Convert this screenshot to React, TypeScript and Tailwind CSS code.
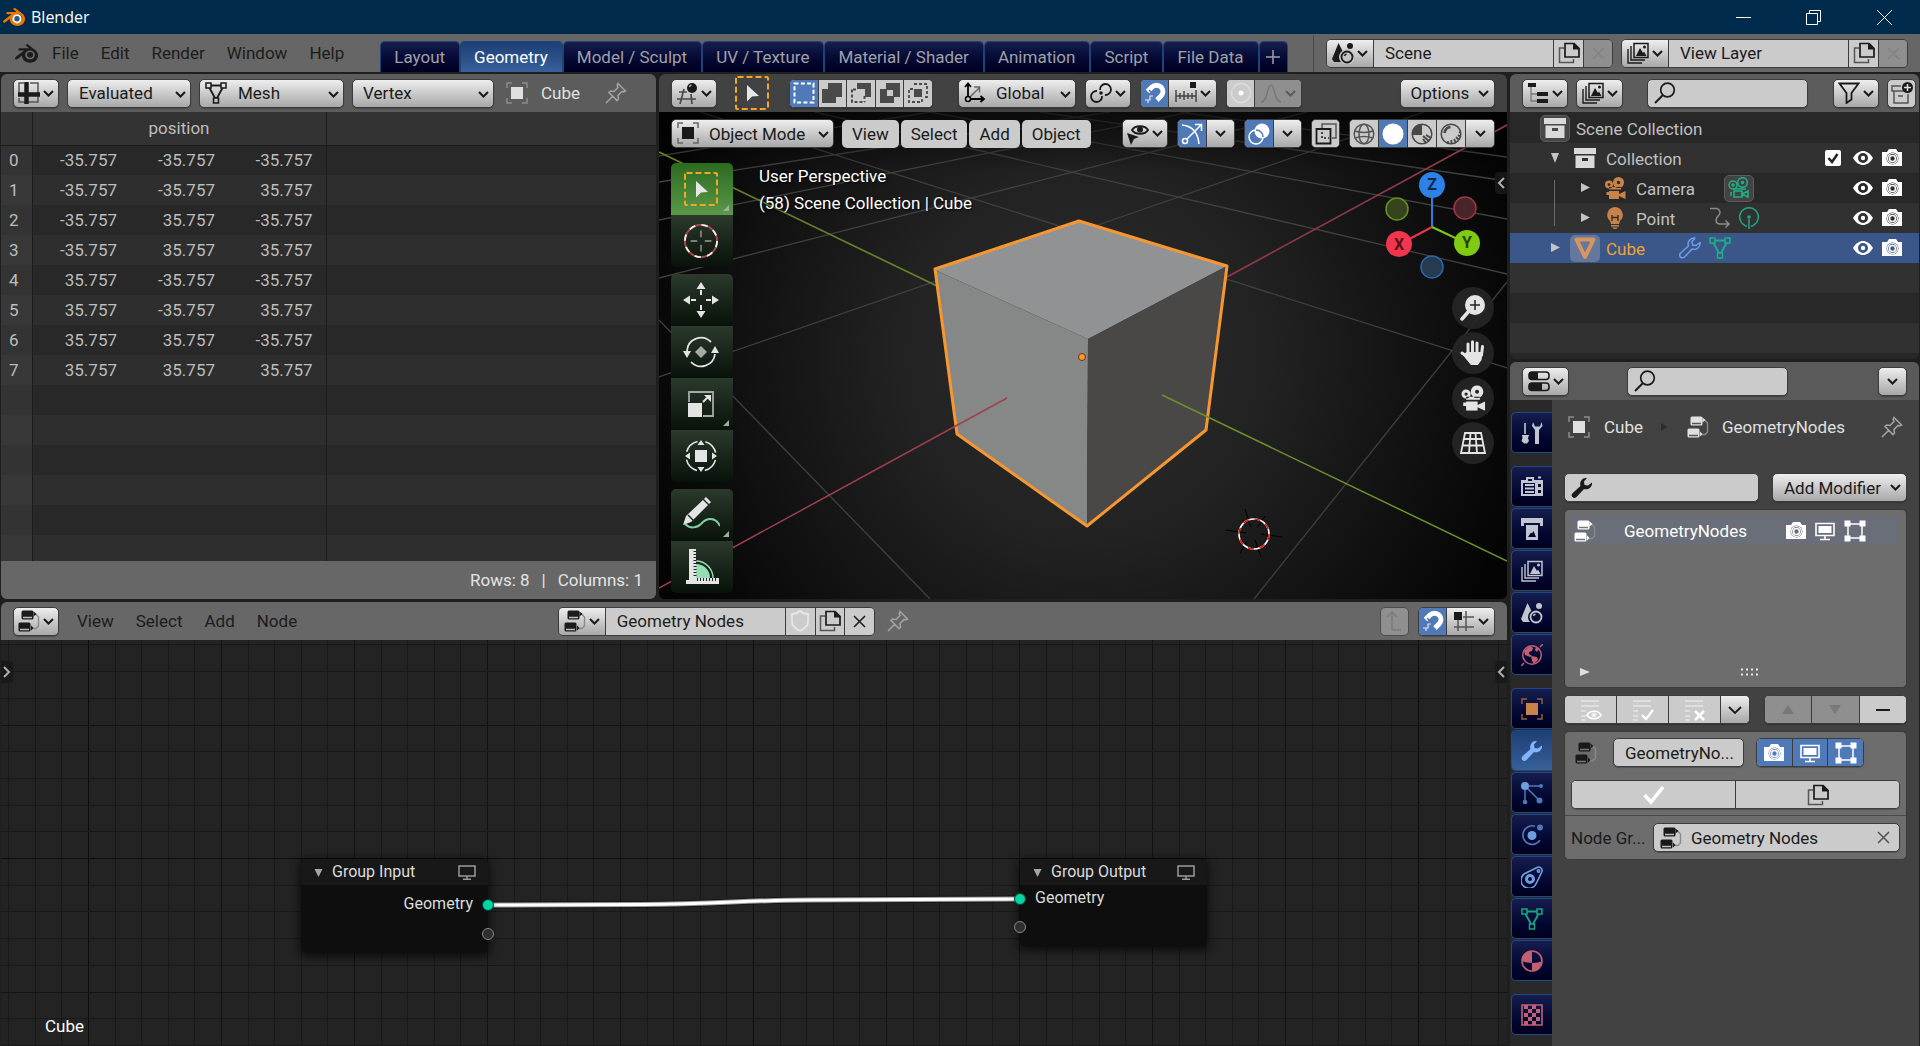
import React from "react";
import type { ReactNode } from "react";
import { SiBlender } from "react-icons/si";

const RAISED = "border border-[#3c3c3c] bg-linear-to-b from-[#eeeeee] to-[#a8a8a8] text-[#1a1a1a] shadow-[0_1px_1px_rgba(0,0,0,0.25)]";
const FLAT = "border border-[#3c3c3c] bg-[#cbcbcb] text-[#1a1a1a] shadow-[0_1px_1px_rgba(0,0,0,0.25)]";

/* ------------------------------------------------------------------ icons */

function Svg({ s = 22, box = 22, className = "", children }: { s?: number; box?: number; className?: string; children: ReactNode }) {
  return (
    <svg width={s} height={s} viewBox={`0 0 ${box} ${box}`} fill="none" stroke="currentColor" strokeWidth={1.5} className={`shrink-0 ${className}`} aria-hidden="true">
      {children}
    </svg>
  );
}

const Chevron = ({ className = "" }: { className?: string }) => (
  <svg width="11" height="7" viewBox="0 0 11 7" fill="none" stroke="currentColor" strokeWidth="2" className={`shrink-0 ${className}`} aria-hidden="true">
    <path d="M1 1l4.5 4.5L10 1" />
  </svg>
);

const SheetIcon = () => (
  <Svg>
    <path d="M1 6V1h5M12 1h8v5M1 16v4h5M12 20h8v-4M1 6v5M20 6v10M6 20h6" stroke="#555" />
    <path d="M8.5 0v22M0 12.5h22" strokeWidth="4.5" />
  </Svg>
);
const MeshIcon = ({ className = "" }: { className?: string }) => (
  <Svg className={className}>
    <path d="M6 3.5h10M4.5 6L10 16M17.5 6L12 16" strokeWidth="1.8" />
    <path d="M1 1h5v5H1zM16 1h5v5h-5zM8.5 16h5v5h-5z" />
  </Svg>
);
const ObjectIcon = ({ className = "", dim = "#8c8c8c" }: { className?: string; dim?: string }) => (
  <Svg className={className}>
    <path d="M1 6V1h5M16 1h5v5M21 16v5h-5M6 21H1v-5" stroke={dim} />
    <path d="M5 5h12v12H5z" fill="currentColor" stroke="none" />
  </Svg>
);
const PinIcon = () => (
  <Svg className="text-[#a2a2a2]">
    <path d="M13 1.5l7.5 7.5-2 1-1.500-.5-4 4 .5 3.5-1.500 1.5L4 10.5 5.5 9l3.5.5 4-4-.8-2zM8 14l-7 7" strokeWidth="1.6" />
  </Svg>
);
const ViewportIcon = () => (
  <Svg>
    <path d="M3 10h8M1 17h19M8 7L4 22M15 12l1 10" stroke="#4a4a4a" strokeWidth="1.7" />
    <circle cx="16" cy="6" r="5" fill="#1a1a1a" stroke="none" />
    <path d="M13.5 5a2.5 2.5 0 0 1 2-2" stroke="#aaa" />
  </Svg>
);
const SelectBox = ({ s = 34 }: { s?: number }) => (
  <Svg s={s} box={34}>
    <rect x="1" y="1" width="32" height="32" rx="1.5" stroke="#f5a623" strokeWidth="2" strokeDasharray="6 3" />
    <path d="M12 9l12 11-7 .5-5 5z" fill="#e6e6e6" stroke="none" />
  </Svg>
);
const ModeSet = () => (
  <Svg><rect x="1.5" y="1.5" width="19" height="19" strokeWidth="2" stroke="#fff" strokeDasharray="4 2.3" /></Svg>
);
const ModeAdd = () => (
  <Svg><path d="M7 1h14v14h-6v6H1V7h6z" fill="#4a4a4a" stroke="none" /></Svg>
);
const ModeSub = () => (
  <Svg>
    <path d="M7 1h14v14h-6V7H7z" fill="#4a4a4a" stroke="none" />
    <path d="M2 7.5v12.5h13" stroke="#4a4a4a" strokeWidth="2" strokeDasharray="3 2" />
    <path d="M3 7.5h5M14.5 14v6" stroke="#4a4a4a" strokeWidth="2" strokeDasharray="3 2" />
  </Svg>
);
const ModeDiff = () => (
  <Svg><path fillRule="evenodd" d="M7 1h14v14h-6v6H1V7h6zM8 8h6v6H8z" fill="#4a4a4a" stroke="none" /></Svg>
);
const ModeAnd = () => (
  <Svg>
    <path d="M7 2h13v13h-4M6 7H2v13h13v-4" stroke="#4a4a4a" strokeWidth="1.8" strokeDasharray="3 2" />
    <path d="M7 7h8v8H7z" fill="#4a4a4a" stroke="none" />
  </Svg>
);
const AxesIcon = () => (
  <Svg>
    <path d="M4 17V2M1 5l3-3.5L7 5M4 17h16M16.5 14l3.5 3-3.5 3" strokeWidth="1.8" />
    <path d="M6 15l9-9M10 5h5.5v5.5" stroke="#6a6a6a" />
    <circle cx="4" cy="17" r="2.5" fill="#cbcbcb" />
  </Svg>
);
const PivotIcon = () => (
  <Svg>
    <path d="M10 8a5.500 5.500 0 1 1 5 5M12 14a5.500 5.500 0 1 1-5-5" strokeWidth="1.8" />
    <circle cx="11" cy="11" r="1.8" fill="currentColor" stroke="none" />
  </Svg>
);
const MagnetIcon = () => (
  <Svg className="text-white">
    <path d="M3.5 9.5L8 5a6.3 6.3 0 0 1 9 9l-4.5 4.5" strokeWidth="5" />
    <path d="M5 8l4 4M10 16l4 4" stroke="#5079b8" strokeWidth="1.5" />
    <path d="M1 18h5v-4h3M4 21v-3" strokeWidth="1.2" stroke="#dfe8f5" />
  </Svg>
);
const IncrementIcon = () => (
  <Svg>
    <path d="M1 8v12M21 8v12M5 11v6M9 9v9M13 11v6M17 11v6M1 14h20" stroke="#444" strokeWidth="1.5" />
    <path d="M15 0h6v6h-6z" fill="currentColor" stroke="none" />
  </Svg>
);
const SceneIcon = ({ className = "" }: { className?: string }) => (
  <Svg className={className}>
    <path d="M6.5 1L12 12l-3 8H2l-2-3z" fill="currentColor" stroke="none" />
    <circle cx="18" cy="4" r="3" fill="currentColor" stroke="none" />
    <circle cx="15" cy="15" r="7.5" fill="#c4c4c4" stroke="#c4c4c4" strokeWidth="1" className="in-data-[tab]:fill-[#0a0d35] in-data-[tab]:stroke-[#0a0d35]" />
    <circle cx="15" cy="15" r="5.5" strokeWidth="1.8" />
    <path d="M12.5 14a3 3 0 0 1 2-2" />
  </Svg>
);
const LayersIcon = ({ className = "" }: { className?: string }) => (
  <Svg className={className}>
    <path d="M7 1.5h14v14H7z" />
    <path d="M4 4v14h14M1 7v14h14" strokeWidth="1.4" />
    <path d="M9 14l4-8 3 5 1-1.5 2.5 4.5z" fill="currentColor" stroke="none" />
    <circle cx="17.5" cy="5" r="1.5" fill="currentColor" stroke="none" />
  </Svg>
);
const CopyIcon = () => (
  <Svg>
    <path d="M6 6H1.5v14.5h14V17" stroke="#555" />
    <path d="M7 1.5h9l5 5V15H7z" strokeWidth="1.7" />
    <path d="M15 1h1.5L21.5 6v1.5H15z" fill="currentColor" stroke="none" />
  </Svg>
);
const CrossIcon = ({ className = "" }: { className?: string }) => (
  <Svg s={13} box={13} className={className}><path d="M1 1l11 11M12 1L1 12" strokeWidth="1.6" /></Svg>
);
const TreeIcon = () => (
  <Svg>
    <path d="M1 1h8v4H1zM10 10h11v4H10zM10 17h11v4H10z" fill="currentColor" stroke="none" />
    <path d="M4 5v14h6M4 12h6" stroke="#777" strokeWidth="1.3" />
  </Svg>
);
const SearchIcon = () => (
  <Svg><circle cx="13.5" cy="8" r="6.8" strokeWidth="1.7" /><path d="M9 13l-8 8" strokeWidth="1.9" /></Svg>
);
const FilterIcon = () => (
  <Svg><path d="M1.5 1.5h19l-7 9.5v6.5L8.5 21V11z" strokeWidth="1.8" /></Svg>
);
const NewCollectionIcon = () => (
  <Svg>
    <path d="M10 4H1v5h14M3 9v12h14v-9M7 14h5" stroke="#555" />
    <circle cx="16.5" cy="5.5" r="5.5" fill="#1a1a1a" stroke="none" />
    <path d="M16.5 2v7M13 5.5h7" stroke="#e0e0e0" />
  </Svg>
);
const ArchiveIcon = () => (
  <Svg className="text-[#dadada]">
    <path d="M0 1h22v6H0z" fill="currentColor" stroke="none" />
    <path fillRule="evenodd" d="M1.5 8.5h19V21h-19zM8 11v3h6v-3z" fill="currentColor" stroke="none" />
  </Svg>
);
const MovieIcon = ({ className = "", line = false }: { className?: string; line?: boolean }) =>
  line ? (
    <Svg className={className}>
      <circle cx="5" cy="8" r="4" /><circle cx="14.5" cy="5.5" r="4.8" />
      <circle cx="5" cy="8" r="1" /><circle cx="14.5" cy="5.5" r="1" />
      <path d="M5 12h13M6 14h8v6H6zM3 15v4M14 17l6-3v6z" />
    </Svg>
  ) : (
    <Svg className={className}>
      <path fillRule="evenodd" fill="currentColor" stroke="none" d="M5 3.5A4 4 0 1 1 5 11.5 4 4 0 1 1 5 3.5zM5 6.2a1.4 1.4 0 1 0 0 2.8 1.4 1.4 0 0 0 0-2.8zM14.5 0a5.5 5.5 0 1 1 0 11 5.5 5.5 0 0 1 0-11zM14.5 3.8a1.7 1.7 0 1 0 0 3.4 1.7 1.7 0 0 0 0-3.4zM5 10h12v2.5H5zM5 14h10v8H5zM2.5 15H5v3H2.5zM15 17l6.5-3v8L15 19z" />
    </Svg>
  );
const BulbIcon = () => (
  <Svg className="text-[#c8834a]">
    <path d="M11 0a8 8 0 0 1 5 14l-1 3H7l-1-3a8 8 0 0 1 5-14zM7 18h8v1.5H7zM8 20.5h6l-2 1.5h-2z" fill="currentColor" stroke="none" />
    <path d="M8 8v6M14 8v6M8 10.5h6" stroke="#303030" strokeWidth="1.4" />
  </Svg>
);
const FlowArrow = () => (
  <Svg className="text-[#8a8a8a]"><path d="M1 1.500h7a4 4 0 0 1 2 6.500c-4 3.500-4 9 1 9h9M16.5 13.5L20 17l-3.5 3.5" /></Svg>
);
const LightData = () => (
  <Svg className="text-[#1fa880]">
    <path d="M7 18.500a9.300 9.300 0 1 1 8 0" /><circle cx="11" cy="10" r="1.8" fill="currentColor" stroke="none" />
    <path d="M11 12v10" /><path d="M8 18v3M14 18v3" strokeDasharray="2 1" />
  </Svg>
);
const WRENCH = "M21 5.5a6 6 0 0 1-8 6.5L5.5 20a2.7 2.7 0 0 1-4-3.7L9.5 9A6 6 0 0 1 16 1l-3 3.5.5 3.5 3.5.5z";
const Wrench = ({ className = "", line = false }: { className?: string; line?: boolean }) => (
  <Svg className={className}><path d={WRENCH} fill={line ? "none" : "currentColor"} stroke={line ? "currentColor" : "none"} strokeLinejoin="round" /></Svg>
);
const CubeTriangle = () => (
  <Svg className="text-[#d9955f]"><path d="M2.5 2.5h17L11 20z" strokeWidth="4" strokeLinejoin="round" /></Svg>
);
const EyeIcon = () => (
  <Svg s={20} box={20} className="text-white">
    <path fillRule="evenodd" fill="currentColor" stroke="none" d="M0 10C3 5 6.5 3 10 3s7 2 10 7c-3 5-6.5 7-10 7s-7-2-10-7zM10 5a5 5 0 1 0 0 10 5 5 0 0 0 0-10z" />
    <circle cx="10" cy="10" r="2.2" fill="currentColor" stroke="none" />
  </Svg>
);
const PhotoIcon = ({ hole = "fill-[#2c2c2c]" }: { hole?: string }) => (
  <Svg s={20} box={20} className="text-white">
    <path d="M0 4h5l2-3h7l2 3h4v14H0z" fill="currentColor" stroke="none" />
    <circle cx="10.5" cy="10.5" r="6" className={hole} stroke="none" />
    <circle cx="10.5" cy="10.5" r="5" strokeWidth="1.2" />
    <circle cx="10.5" cy="10.5" r="3" strokeWidth="1.6" />
  </Svg>
);
const MonitorIcon = () => (
  <Svg s={20} box={20} className="text-white">
    <path d="M1 2.5h18v12H1z" strokeWidth="1.6" /><path d="M3.5 5h13v7h-13z" fill="currentColor" stroke="none" /><path d="M10 15v3M5 18.5h10" strokeWidth="1.6" />
  </Svg>
);
const EditBox = () => (
  <Svg className="text-white"><path d="M4 4h14v14H4z" /><path d="M.5.5h6v6h-6zM15.5.5h6v6h-6zM.5 15.5h6v6h-6zM15.5 15.5h6v6h-6z" fill="currentColor" stroke="none" /></Svg>
);
const NodesIcon = ({ className = "", inner = "#bdbdbd" }: { className?: string; inner?: string }) => (
  <Svg className={className}>
    <rect x="3.5" y=".5" width="12" height="9" rx="1.5" fill="currentColor" stroke="none" />
    <rect x=".5" y="12.5" width="12" height="9" rx="1.5" fill="currentColor" stroke="none" />
    <path d="M5 7.5h9M2 19.5h9" stroke={inner} strokeWidth="1.3" />
    <path d="M15 4h2.5l3 3v9l-2.5 2.5h-3.5" stroke="#8a8a8a" strokeWidth="1.4" />
    <path d="M15.5 1.5L18.5 4l-3 2.5zM13 15.5l2.5 2.5-2.5 2.5z" fill="currentColor" stroke="none" />
  </Svg>
);
const PropsIcon = () => (
  <Svg>
    <rect x="1" y="2" width="20" height="7.5" rx="3" strokeWidth="1.6" /><path d="M3 2h7v7.5H3a2 2 0 0 1-2-2V4a2 2 0 0 1 2-2z" fill="currentColor" stroke="none" />
    <rect x="1" y="13" width="20" height="7.5" rx="3" strokeWidth="1.6" /><path d="M3 13h11v7.5H3a2 2 0 0 1-2-2V15a2 2 0 0 1 2-2z" fill="currentColor" stroke="none" />
  </Svg>
);

/* editor tab icons */
const ToolTab = () => (
  <Svg className="text-[#c2c4cf]">
    <path d="M4 1v11" strokeWidth="1.6" /><path d="M1 13h7l-1 3 1 3-2 2.5H3L.5 19l1-3z" fill="currentColor" stroke="none" />
    <path d="M12 0l-1 4 3 4v13a1.5 1.5 0 0 0 4 0V8l3.5-4-1-4-1.5 4.5h-5z" fill="currentColor" stroke="none" />
  </Svg>
);
const RenderTab = () => (
  <Svg className="text-[#c2c4cf]">
    <path fillRule="evenodd" d="M0 4h5V1h8v3h9v16H0zM7 3v2h4V3zM2 7v11h12V7zM17 8v3h3V8zM17 14v3h3v-3z" fill="currentColor" stroke="none" />
    <path d="M4 9h9M4 12.5h9M4 16h9M17 1.5h3" strokeWidth="1.8" />
  </Svg>
);
const OutputTab = () => (
  <Svg className="text-[#c2c4cf]">
    <path d="M0 0h22v8h-3V5H3v3H0z" fill="currentColor" stroke="none" />
    <path fillRule="evenodd" d="M5 7h12v15H5zM7 19h8l-2.5-6-1.5 2.5-1-1z" fill="currentColor" stroke="none" />
  </Svg>
);
const WorldTab = () => (
  <Svg className="text-[#c25f73]">
    <circle cx="11" cy="11" r="9.3" /><path d="M0 22l3-3M19 3l3-3" />
    <path d="M3 7l6-5 3 2-1 3-3 1v2l3 2-2 1-5-2zM10 12l6 1 1 3-4 4-2-3zM15 3l3 2-2 3-2-2z" fill="currentColor" stroke="none" />
  </Svg>
);
const ParticleTab = () => (
  <Svg className="text-[#4f78b8]">
    <path d="M8 4h11M4 8v11M6.5 6.5L18 18" /><circle cx="4" cy="4" r="4" fill="#6f9ee0" stroke="none" />
    <circle cx="20" cy="4" r="2" fill="currentColor" stroke="none" /><circle cx="4" cy="20" r="2.3" fill="currentColor" stroke="none" /><circle cx="18.5" cy="18.5" r="3" fill="currentColor" stroke="none" />
  </Svg>
);
const PhysicsTab = () => (
  <Svg className="text-[#4f78b8]">
    <path d="M14 2.2a9.3 9.3 0 1 0 5 14" strokeWidth="1.7" /><circle cx="11" cy="11.5" r="4.5" fill="#6f9ee0" stroke="none" /><circle cx="19" cy="3.5" r="3" fill="currentColor" stroke="none" />
  </Svg>
);
const ConstraintTab = () => (
  <Svg className="text-[#6f9ee0]">
    <path d="M3 8L16 1.5a3.5 3.5 0 0 1 5 4L15.5 17A8 8 0 1 1 3 8z" strokeWidth="1.6" /><circle cx="9" cy="13" r="3.5" strokeWidth="3" /><circle cx="17.5" cy="5" r="1.2" />
  </Svg>
);
const MaterialTab = () => (
  <Svg className="text-[#c25f73]">
    <circle cx="11" cy="11" r="10" strokeWidth="1.6" /><path d="M11 1v12C7 13 3 12 1 11A10 10 0 0 1 11 1zM11 21v-8c4 0 8-1 10-2a10 10 0 0 1-10 10z" fill="currentColor" stroke="none" />
  </Svg>
);
const CheckerTab = () => (
  <Svg className="text-[#c25f73]">
    <path d="M1 1h20v20H1z" strokeWidth="1.6" />
    <path d="M5 1v20M13 1v20" strokeWidth="4" strokeDasharray="4 4" /><path d="M9 5v16M17 5v16" strokeWidth="4" strokeDasharray="4 4" />
  </Svg>
);

/* --------------------------------------------------------------- controls */

function MenuButton({ label, children, w = "w-[46px]", cls = RAISED }: { label: string; children: ReactNode; w?: string; cls?: string }) {
  return (
    <button type="button" aria-label={label} aria-haspopup="menu" className={`flex h-[29px] ${w} shrink-0 items-center justify-center gap-[3px] rounded-[5px] ${cls}`}>
      {children}
      <Chevron />
    </button>
  );
}

function Dropdown({ label, value, icon, w, pad }: { label: string; value: string; icon?: ReactNode; w: string; pad: string }) {
  return (
    <div className={`relative flex h-[29px] shrink-0 ${w}`}>
      <span className="pointer-events-none absolute top-[3px] left-[6px]">{icon}</span>
      <select aria-label={label} className={`w-full appearance-none rounded-[5px] ${pad} ${RAISED}`} defaultValue={value}>
        <option>{value}</option>
      </select>
      <Chevron className="pointer-events-none absolute top-[12px] right-[5px] text-[#1a1a1a]" />
    </div>
  );
}

function Segments({ children, className = "" }: { children: ReactNode; className?: string }) {
  return <div className={`flex h-[29px] shrink-0 divide-x divide-[#3c3c3c] overflow-hidden rounded-[5px] ${FLAT} ${className}`}>{children}</div>;
}

function Seg({ label, on, up, off, w = "flex-1", children }: { label: string; on?: boolean; up?: boolean; off?: boolean; w?: string; children: ReactNode }) {
  const tone = on ? "bg-[#5079b8] text-white" : off ? "bg-[#8f8f8f] text-[#787878]" : up ? "bg-linear-to-b from-[#eeeeee] to-[#a8a8a8]" : "bg-[#cbcbcb]";
  return (
    <button type="button" aria-label={label} aria-pressed={on} className={`flex h-full items-center justify-center gap-[3px] ${w} ${tone}`}>
      {children}
    </button>
  );
}

function SearchField({ label, icon, className }: { label: string; icon: ReactNode; className: string }) {
  return (
    <label className={`flex h-[29px] items-center rounded-[5px] pl-[6px] ${FLAT} ${className}`}>
      {icon}
      <input type="search" aria-label={label} className="min-w-0 flex-1 bg-transparent px-1 outline-none" />
    </label>
  );
}

/* ---------------------------------------------------------------- top bar */

function TitleBar() {
  return (
    <header className="flex h-[34px] shrink-0 items-center bg-[#002b4d] pl-[3px] text-white">
      <span className="relative flex">
        <SiBlender className="size-[22px] text-[#ea7600]" />
        <svg viewBox="0 0 22 22" className="absolute inset-0 size-[22px]" aria-hidden="true">
          <circle cx="14" cy="12.8" r="4.6" fill="#fff" />
          <circle cx="14" cy="12.8" r="2.7" fill="#265787" />
        </svg>
      </span>
      <h1 className="ml-[6px] font-['Open_Sans',sans-serif] text-base">Blender</h1>
      <div className="ml-auto flex">
        <button type="button" aria-label="Minimize" className="flex h-[34px] w-[70px] items-center justify-center"><svg width="15" height="15" stroke="#fff" aria-hidden="true"><path d="M0 7.5h15" /></svg></button>
        <button type="button" aria-label="Restore" className="flex h-[34px] w-[70px] items-center justify-center"><svg width="15" height="15" stroke="#fff" fill="none" aria-hidden="true"><path d="M.5 3.5h11v11H.5zM3.5 3.5v-3h11v11h-3" /></svg></button>
        <button type="button" aria-label="Close" className="flex h-[34px] w-[72px] items-center justify-center"><svg width="15" height="15" stroke="#fff" aria-hidden="true"><path d="M0 0l15 15M15 0L0 15" /></svg></button>
      </div>
    </header>
  );
}

const WORKSPACES = ["Layout", "Geometry", "Model / Sculpt", "UV / Texture", "Material / Shader", "Animation", "Script", "File Data"];

function NameBlock({ label, value, icon }: { label: string; value: string; icon: ReactNode }) {
  return (
    <div className="flex h-[29px] w-[287px] divide-x divide-[#3c3c3c] overflow-hidden rounded-[5px] border border-[#3c3c3c] text-[#1a1a1a]">
      <Seg label={`Browse ${label}`} up w="w-[47px]">{icon}<Chevron /></Seg>
      <input aria-label={label} defaultValue={value} className="w-[180px] bg-[#cbcbcb] pl-[11px] outline-none" />
      <Seg label={`New ${label}`} w="w-[30px]"><CopyIcon /></Seg>
      <Seg label={`Remove ${label}`} off w="w-[28px]"><CrossIcon className="text-[#828282]" /></Seg>
    </div>
  );
}

function MenuBar() {
  return (
    <div className="flex h-[38px] shrink-0 items-center bg-[#666666] text-[#1c1c1c]">
      <SiBlender className="ml-[15px] size-[23px]" />
      <nav aria-label="Main menu" className="ml-[14px] flex gap-[22px]">
        {["File", "Edit", "Render", "Window", "Help"].map((m) => (
          <button key={m} type="button">{m}</button>
        ))}
      </nav>
      <div role="tablist" aria-label="Workspaces" className="ml-[36px] flex h-[31px] self-end">
        {WORKSPACES.map((w) => (
          <button
            key={w}
            type="button"
            role="tab"
            aria-selected={w === "Geometry"}
            className={`rounded-t-[5px] border border-b-0 border-[#1f4377] bg-linear-to-b pr-[14px] pl-[13px] whitespace-nowrap ${w === "Geometry" ? "from-[#1c3f74] to-[#38609c] text-white" : "from-[#171d4e] to-[#000020] text-[#a0a0a6]"}`}
          >
            {w}
          </button>
        ))}
        <button type="button" aria-label="Add workspace" className="flex w-[29px] items-center justify-center rounded-t-[5px] border border-b-0 border-[#1f4377] bg-linear-to-b from-[#171d4e] to-[#000020] text-[#a0a0a6]">
          <Svg s={14} box={14}><path d="M7 0v14M0 7h14" /></Svg>
        </button>
      </div>
      <div className="ml-auto flex gap-2 border-l border-[#4a4a4a] py-[4px] pr-[12px] pl-3">
        <NameBlock label="Scene" value="Scene" icon={<SceneIcon />} />
        <NameBlock label="View Layer" value="View Layer" icon={<LayersIcon />} />
      </div>
    </div>
  );
}

/* ------------------------------------------------------------ spreadsheet */

const N = "-35.757";
const P = "35.757";
const VERTICES = [[N, N, N], [N, N, P], [N, P, N], [N, P, P], [P, N, N], [P, N, P], [P, P, N], [P, P, P]];
const BLANK = [8, 9, 10, 11, 12, 13];

function Spreadsheet() {
  return (
    <section aria-label="Spreadsheet" className="flex min-w-0 flex-[655] flex-col overflow-hidden rounded-[6px] bg-[#2b2b2b] text-[#bdbdbd]">
      <div className="flex h-[38px] shrink-0 items-center gap-2 bg-[#5c5c5c] pl-3">
        <MenuButton label="Editor type"><SheetIcon /></MenuButton>
        <Dropdown label="Object evaluation state" value="Evaluated" w="w-[124px]" pad="pl-[11px]" />
        <Dropdown label="Geometry component" value="Mesh" w="w-[145px]" pad="pl-[38px]" icon={<MeshIcon className="text-[#1a1a1a]" />} />
        <Dropdown label="Domain" value="Vertex" w="w-[142px]" pad="pl-[10px]" />
        <span className="ml-[4px] flex items-center gap-[13px] text-[#e0e0e0]"><ObjectIcon />Cube</span>
        <button type="button" aria-label="Pin" className="ml-[17px]"><PinIcon /></button>
      </div>
      <div className="min-h-0 flex-1 overflow-hidden">
        <table className="w-full table-fixed border-collapse">
          <colgroup>
            <col className="w-[31px]" /><col className="w-[98px]" /><col className="w-[98px]" /><col className="w-[98px]" /><col />
          </colgroup>
          <thead>
            <tr className="h-[33px] border-b border-[#1c1c1c] bg-[#333333]">
              <th className="border-r border-[#1c1c1c]" aria-label="Index" />
              <th colSpan={3} className="border-r border-[#1c1c1c] text-center font-normal">position</th>
              <th aria-hidden="true" />
            </tr>
          </thead>
          <tbody>
            {VERTICES.map((row, i) => (
              <tr key={i} className="h-[30px] odd:bg-[#282828] even:bg-[#2e2e2e]">
                <th scope="row" className="border-r border-[#1c1c1c] bg-white/5 pl-2 text-left font-normal">{i}</th>
                {row.map((v, c) => (
                  <td key={c} className="pr-[13px] text-right">{v}</td>
                ))}
                <td className="border-l border-[#1c1c1c]" />
              </tr>
            ))}
            {BLANK.map((i) => (
              <tr key={i} className="h-[30px] odd:bg-[#282828] even:bg-[#2e2e2e]">
                <th className="border-r border-[#1c1c1c] bg-white/5" aria-hidden="true" />
                <td colSpan={3} />
                <td className="border-l border-[#1c1c1c]" />
              </tr>
            ))}
          </tbody>
        </table>
      </div>
      <div className="flex h-[38px] shrink-0 items-center justify-end gap-3 bg-[#676767] pr-[13px] text-[#e4e4e4]">
        <span>Rows: 8</span><span>|</span><span>Columns: 1</span>
      </div>
    </section>
  );
}

/* --------------------------------------------------------------- viewport */

const FLOOR = [
  [659, 377, 1424, 112], [659, 278, 1307, 112], [659, 220, 1190, 112], [659, 182, 1110, 112], [659, 156, 930, 112],
  [815, 112, 1507, 274], [700, 112, 1507, 368], [930, 112, 1507, 219], [1040, 112, 1507, 181], [1180, 112, 1507, 157],
  [659, 320, 930, 599], [1507, 282, 1254, 599],
];

function Scene3D() {
  return (
    <svg viewBox="659 112 848 487" preserveAspectRatio="xMidYMid slice" className="absolute inset-0 size-full" aria-label="Cube in user perspective">
      <defs>
        <radialGradient id="world" gradientUnits="userSpaceOnUse" cx="1083" cy="356" r="460">
          <stop offset="0" stopColor="#2e2e2e" /><stop offset="0.4" stopColor="#222222" /><stop offset="1" stopColor="#040404" />
        </radialGradient>
        <linearGradient id="fog" x1="0" y1="0" x2="0" y2="1">
          <stop offset="0" stopColor="#000" stopOpacity="0.6" /><stop offset="1" stopColor="#000" stopOpacity="0" />
        </linearGradient>
      </defs>
      <rect x="659" y="112" width="848" height="487" fill="url(#world)" />
      <g stroke="#404040" strokeWidth="1.3">
        {FLOOR.map(([x1, y1, x2, y2]) => <line key={`${x1}-${y1}-${x2}`} x1={x1} y1={y1} x2={x2} y2={y2} />)}
      </g>
      <rect x="659" y="112" width="848" height="60" fill="url(#fog)" />
      <g strokeWidth="1.7">
        <path d="M659 152L937 286" stroke="#648226" /><path d="M1227 277L1507 125" stroke="#8e3a48" />
      </g>
      <path d="M935 270L1079 221 1227 266 1088 339z" fill="#919294" />
      <path d="M935 270L1088 339 1087 525 957 434z" fill="#868887" />
      <path d="M1088 339L1227 266 1206 430 1087 525z" fill="#4a4747" />
      <path d="M935 269L1079 221 1227 266 1206 430 1087 526 957 434z" fill="none" stroke="#f7972f" strokeWidth="3" strokeLinejoin="round" />
      <path d="M1007 398L659 588" stroke="#a13f4e" strokeWidth="1.5" />
      <path d="M1162 395L1507 561" stroke="#6b922b" strokeWidth="1.5" />
      <circle cx="1082" cy="357" r="3.5" fill="#ff9a28" stroke="#5a3510" strokeWidth="1" />
      <g fill="none">
        <path d="M1226 530l20 3M1261 534l21 3M1245 509l6 18M1255 540l6 17M1265 516l-8 12M1247 541l-7 12" stroke="#000" />
        <circle cx="1254" cy="534" r="15" stroke="#fff" strokeWidth="1.6" />
        <circle cx="1254" cy="534" r="15" stroke="#e01212" strokeWidth="1.6" strokeDasharray="6 5.78" />
      </g>
    </svg>
  );
}

function ViewportTool({ label, active, corner, children }: { label: string; active?: boolean; corner?: boolean; children: ReactNode }) {
  return (
    <button type="button" aria-label={label} aria-pressed={!!active} className={`relative flex h-[52px] w-full items-center justify-center bg-linear-to-b pr-[3px] text-[#e4e4e4] ${active ? "from-[#2c6a20] to-[#5a9a48]" : "from-[#2c3a2d] to-[#08120a]"}`}>
      {children}
      {corner && <span className="absolute right-[4px] bottom-[4px] size-[6px] bg-[#a8a8a8] [clip-path:polygon(100%_0,100%_100%,0_100%)]" />}
    </button>
  );
}

const TOOLGROUP = "overflow-hidden rounded-[5px]";

function Toolbar() {
  return (
    <div className="flex w-[62px] flex-col gap-[7px]">
      <div className={TOOLGROUP}>
        <ViewportTool label="Select box" active corner><SelectBox /></ViewportTool>
        <ViewportTool label="Cursor">
          <Svg s={36} box={38}>
            <circle cx="19" cy="19" r="17" strokeWidth="2" stroke="#b04a4a" /><circle cx="19" cy="19" r="17" strokeWidth="2" stroke="#f0f0f0" strokeDasharray="6.7 6.65" />
            <path d="M19 8v7M19 23v7M8 19h7M23 19h7" stroke="#9a9a9a" />
          </Svg>
        </ViewportTool>
      </div>
      <div className={TOOLGROUP}>
        <ViewportTool label="Move">
          <Svg s={36} box={36}>
            <path d="M18 0l4.5 7h-9zM18 36l4.5-7h-9zM0 18l7-4.5v9zM36 18l-7-4.5v9z" fill="currentColor" stroke="none" />
            <path d="M18 8v5M18 23v5M8 18h5M23 18h5" strokeWidth="2" />
          </Svg>
        </ViewportTool>
        <ViewportTool label="Rotate">
          <Svg s={36} box={36}>
            <path d="M4 17A14 14 0 0 1 28 8M32 20A14 14 0 0 1 8 28" strokeWidth="1.8" />
            <path d="M0 17h8l-4 7zM36 19h-8l4-7z" fill="currentColor" stroke="none" /><path d="M18 12l6 6-6 6-6-6z" fill="#a8a8a8" stroke="none" />
          </Svg>
        </ViewportTool>
        <ViewportTool label="Scale" corner>
          <Svg s={28} box={28}>
            <path d="M2 12V2h24v24H16" stroke="#a8a8a8" strokeWidth="1.8" /><path d="M1 13h14v14H1z" fill="currentColor" stroke="none" />
            <path d="M16 12l5-5" strokeWidth="2" /><path d="M17 5h7v7z" fill="currentColor" stroke="none" />
          </Svg>
        </ViewportTool>
        <ViewportTool label="Transform">
          <Svg s={36} box={36}>
            <circle cx="18" cy="18" r="15" strokeWidth="1.6" strokeDasharray="15.56 8" strokeDashoffset="-4" />
            <path d="M12 12h12v12H12zM18 2l3.5 5h-7zM18 34l3.5-5h-7zM2 18l5-3.5v7zM34 18l-5-3.5v7z" fill="currentColor" stroke="none" />
          </Svg>
        </ViewportTool>
      </div>
      <div className={TOOLGROUP}>
        <ViewportTool label="Annotate" corner>
          <Svg s={38} box={38}>
            <path d="M1 29l3-9L21 4l5 5L9 26zM22 3l2-2 5 5-2 2z" fill="currentColor" stroke="none" /><path d="M6 19l6 6" stroke="#1c281d" />
            <path d="M3 28c5 5 12 4 16 0 5-6 14-8 19 2" stroke="#7fcfa5" strokeWidth="2" />
          </Svg>
        </ViewportTool>
        <ViewportTool label="Measure">
          <Svg s={36} box={36}>
            <path d="M6 0h7v29h23v6H3v-4h3z" fill="currentColor" stroke="none" />
            <path d="M13 15a14 14 0 0 1 14 14H13z" fill="#93dcb4" stroke="none" /><path d="M13 12a17 17 0 0 1 17 17" stroke="#93dcb4" />
            <path d="M12 2v27" strokeWidth="3" stroke="#222" strokeDasharray="1 2" /><path d="M14 30.5h20" strokeWidth="3" stroke="#222" strokeDasharray="1 2" />
          </Svg>
        </ViewportTool>
      </div>
    </div>
  );
}

function AxisGizmo() {
  return (
    <svg width="104" height="120" className="absolute top-[56px] right-[23px]" fontFamily="Roboto, sans-serif" fontWeight="700" fontSize="16" textAnchor="middle" aria-label="Orientation gizmo">
      <g transform="translate(-1380 -168)" strokeWidth="2">
        <circle cx="1465" cy="208" r="11" fill="#48242b" stroke="#a03548" strokeWidth="1.5" />
        <circle cx="1397" cy="209" r="11" fill="#37431f" stroke="#61931d" strokeWidth="1.5" />
        <circle cx="1432" cy="267" r="11" fill="#263a50" stroke="#2d66a8" strokeWidth="1.5" />
        <path d="M1432 227v-40" stroke="#2c7fe0" /><path d="M1432 227l-32 17" stroke="#e8344d" /><path d="M1432 227l34 16" stroke="#7ec514" />
        <circle cx="1432" cy="185" r="13" fill="#2c82e6" /><circle cx="1399" cy="244" r="13" fill="#f0364f" /><circle cx="1467" cy="243" r="13" fill="#80ca12" />
        <text x="1432" y="190" fill="#0e2a4d">Z</text><text x="1399" y="250" fill="#5a0f1b">X</text><text x="1467" y="248" fill="#27420a">Y</text>
      </g>
    </svg>
  );
}

const NAV = [
  { label: "Zoom", icon: <Svg s={26} box={26}><circle cx="15" cy="10" r="10" fill="currentColor" stroke="none" /><path d="M9 16l-7 8" strokeWidth="3.5" strokeLinecap="round" /><path d="M15 5v10M10 10h10" stroke="#222" /></Svg> },
  { label: "Pan", icon: <Svg s={26} box={26}><path d="M8 16V4M12.5 14V1.8M17 14V3M21.5 15l1-8.5M9 18l-7-5" strokeWidth="3" strokeLinecap="round" /><path d="M6.5 12H23l-1.5 8-3.5 5h-7l-5-6-3-4z" fill="currentColor" stroke="none" /></Svg> },
  { label: "Camera view", icon: <MovieIcon className="scale-115" /> },
  { label: "Orthographic", icon: <Svg s={26} box={26}><path d="M5 3h16l4 20H1zM4 9h18M3 15.5h21M10.5 3L9 23M15.5 3L17 23" strokeWidth="1.8" /></Svg> },
];

function Viewport() {
  return (
    <section aria-label="3D viewport" className="flex min-w-0 flex-[848] flex-col overflow-hidden rounded-[6px] bg-black">
      <div className="flex h-[38px] shrink-0 items-center bg-[#424242] px-3">
        <MenuButton label="Editor type"><ViewportIcon /></MenuButton>
        <span className="ml-[18px]"><SelectBox /></span>
        <Segments className="ml-[20px] w-[144px]">
          <Seg label="Set selection" on><ModeSet /></Seg>
          <Seg label="Extend selection"><ModeAdd /></Seg>
          <Seg label="Subtract selection"><ModeSub /></Seg>
          <Seg label="Invert selection"><ModeDiff /></Seg>
          <Seg label="Intersect selection"><ModeAnd /></Seg>
        </Segments>
        <div className="ml-[25px] flex gap-[9px]">
          <Dropdown label="Transform orientation" value="Global" w="w-[118px]" pad="pl-[37px]" icon={<AxesIcon />} />
          <MenuButton label="Pivot point"><PivotIcon /></MenuButton>
          <Segments className="w-[77px]">
            <Seg label="Snap" on w="w-[28px]"><MagnetIcon /></Seg>
            <Seg label="Snap to" up><IncrementIcon /><Chevron /></Seg>
          </Segments>
          <Segments className="w-[76px]">
            <Seg label="Proportional editing" w="w-[28px]"><Svg className="text-[#dcdcdc]"><circle cx="11" cy="11" r="9.5" /><circle cx="11" cy="11" r="2.5" fill="#fff" stroke="none" /></Svg></Seg>
            <Seg label="Falloff" off><Svg><path d="M1 20c7 0 6-17 10-17s3 17 10 17" /></Svg><Chevron className="text-[#5c5c5c]" /></Seg>
          </Segments>
        </div>
        <div className="ml-auto">
          <MenuButton label="Options" w="w-[95px]"><span className="mr-[6px] ml-[5px]">Options</span></MenuButton>
        </div>
      </div>
      <div className="relative min-h-0 flex-1 overflow-hidden">
        <Scene3D />
        <div className="absolute inset-0 flex flex-col">
          <div className="flex items-center px-3 pt-[7px]">
            <Dropdown label="Interaction mode" value="Object Mode" w="w-[163px]" pad="pl-[37px]" icon={<ObjectIcon className="text-[#1a1a1a]" dim="#666" />} />
            <div className="ml-[8px] flex gap-[2px]">
              {["View", "Select", "Add", "Object"].map((m) => (
                <button key={m} type="button" className="h-[28px] rounded-[5px] bg-[#cbcbcb] px-[10px] text-[#1a1a1a]">{m}</button>
              ))}
            </div>
            <div className="ml-auto flex gap-[9px]">
              <MenuButton label="Visibility">
                <Svg><path d="M5 7c3-5 13-5 16 0-3 5-13 5-16 0z" strokeWidth="2" /><circle cx="13" cy="6.5" r="3" fill="currentColor" stroke="none" /><path d="M0 10l12 4-5 2-3 6z" fill="currentColor" stroke="none" /></Svg>
              </MenuButton>
              <Segments className="w-[58px]">
                <Seg label="Gizmos" on><Svg><path d="M1 2c10 1 16 8 17 19M6 16L20 2M14 1.5h6.5V8" /><circle cx="4" cy="18" r="2.5" /></Svg></Seg>
                <Seg label="Gizmo options" up><Chevron /></Seg>
              </Segments>
              <Segments className="w-[58px]">
                <Seg label="Overlays" on><Svg><circle cx="14" cy="8" r="7.5" fill="#fff" stroke="none" /><circle cx="8" cy="14" r="7" /><path d="M8 7a7 7 0 0 1 7 7" stroke="#5079b8" /></Svg></Seg>
                <Seg label="Overlay options" up><Chevron /></Seg>
              </Segments>
              <Segments className="w-[29px]">
                <Seg label="X-ray"><Svg><path d="M7 5V1h14v14h-4" stroke="#555" /><path d="M1.5 6h14v14.5h-14z" strokeWidth="1.8" /><path d="M7 9v6h7" strokeDasharray="2 2" /></Svg></Seg>
              </Segments>
              <Segments className="w-[146px]">
                <Seg label="Wireframe"><Svg className="text-[#555]"><circle cx="11" cy="11" r="9.8" /><ellipse cx="11" cy="11" rx="5" ry="9.8" /><path d="M2 8c6 2 12 2 18 0M2 15c6-2 12-2 18 0" /></Svg></Seg>
                <Seg label="Solid" on><Svg><circle cx="11" cy="11" r="10.5" fill="#fff" stroke="none" /></Svg></Seg>
                <Seg label="Material preview"><Svg className="text-[#484848]"><circle cx="11" cy="11" r="9.8" /><path d="M11 1v11H1A10 10 0 0 1 11 1z" fill="currentColor" stroke="none" /><path d="M12 13l6 5M15 12l5 3M12 16l3 4" strokeWidth="2" /></Svg></Seg>
                <Seg label="Rendered"><Svg className="text-[#484848]"><circle cx="11" cy="11" r="9.8" /><path d="M4.500 10a7 7 0 0 1 6-6" strokeWidth="2.5" /><path d="M19 9l2 1M18 12l3 2M16 14l3 3M14 16l2 4M11 17l1 4M8 18l0 2" strokeWidth="1.800" /></Svg></Seg>
                <Seg label="Shading options" up><Chevron /></Seg>
              </Segments>
            </div>
          </div>
          <div className="mt-[15px] ml-3 flex items-start gap-[26px]">
            <Toolbar />
            <p className="leading-[27px] text-white [text-shadow:1px_1px_2px_#000]">User Perspective<br />(58) Scene Collection | Cube</p>
          </div>
        </div>
        <button type="button" aria-label="Show sidebar" className="absolute top-[60px] right-0 flex h-[22px] w-3 items-center justify-center rounded-l-[4px] bg-[#161616] text-[#b0b0b0]">
          <svg width="8" height="12" fill="none" stroke="currentColor" strokeWidth="2" aria-hidden="true"><path d="M7 1L2 6l5 5" /></svg>
        </button>
        <AxisGizmo />
        <div className="absolute top-[175px] right-[13px] flex flex-col gap-[3px]">
          {NAV.map((n) => (
            <button key={n.label} type="button" aria-label={n.label} className="flex size-[42px] items-center justify-center rounded-full bg-[#262626]/90 text-[#e4e4e4]">{n.icon}</button>
          ))}
        </div>
      </div>
    </section>
  );
}

/* ------------------------------------------------------------ node editor */

const COLS = Array.from({ length: 60 }, (_, i) => i - 4);
const ROWS = Array.from({ length: 20 }, (_, i) => i - 8);

function tone(i: number, strong: number) {
  if (((i % strong) + strong) % strong === 0) return "#0d0d0d";
  return i % 5 === 0 ? "#131313" : "#191919";
}

function GraphNode({ title, place, body, children }: { title: string; place: string; body: string; children: ReactNode }) {
  return (
    <article className={`absolute w-[187px] rounded-[5px] bg-[#0e0e0e]/95 text-base leading-5 text-[#dcdcdc] shadow-[0_2px_8px_2px_rgba(0,0,0,0.6)] ${place}`}>
      <h2 className="flex h-[26px] items-center rounded-t-[5px] bg-[#181818] pr-[12px] pl-[13px]">
        <svg width="9" height="9" fill="#a6a6a6" aria-hidden="true"><path d="M0.500 1h8L4.500 9z" /></svg>
        <span className="ml-[9px]">{title}</span>
        <svg width="18" height="15" fill="none" stroke="#9a9a9a" strokeWidth="1.5" className="ml-auto" aria-hidden="true"><path d="M1 1h16v10H1zM9 11v3M5 14.2h8" /></svg>
      </h2>
      <div className={body}>{children}</div>
    </article>
  );
}

const Socket = ({ className, live }: { className: string; live?: boolean }) => (
  <span className={`absolute size-3 rounded-full ${live ? "border border-[#0c3d30] bg-[#00d6a3]" : "border border-[#8a8a8a] bg-[#2f2f2f]"} ${className}`} />
);

function NodeEditor() {
  return (
    <section aria-label="Geometry node editor" className="flex min-h-0 flex-[444] flex-col overflow-hidden rounded-t-[6px] bg-[#232323]">
      <div className="flex h-[38px] shrink-0 items-center bg-[#676767] px-3 text-[#1c1c1c]">
        <MenuButton label="Editor type"><NodesIcon /></MenuButton>
        <nav aria-label="Node editor menu" className="ml-[18px] flex gap-[22px]">
          {["View", "Select", "Add", "Node"].map((m) => <button key={m} type="button">{m}</button>)}
        </nav>
        <div className="flex-[261]" />
        <div className="flex shrink-0 items-center gap-3">
          <div className="flex h-[29px] w-[317px] divide-x divide-[#3c3c3c] overflow-hidden rounded-[5px] border border-[#3c3c3c]">
            <Seg label="Browse node tree" up w="w-[47px]"><NodesIcon /><Chevron /></Seg>
            <input aria-label="Node tree name" defaultValue="Geometry Nodes" className="w-[180px] bg-[#cbcbcb] pl-[11px] outline-none" />
            <Seg label="Fake user" w="w-[30px]"><Svg className="text-[#e6e6e6]"><path d="M11 1c2 2 5 3 8 3v8c0 4-4 7-8 9-4-2-8-5-8-9V4c3 0 6-1 8-3z" strokeWidth="1.8" /></Svg></Seg>
            <Seg label="New node tree" w="w-[30px]"><CopyIcon /></Seg>
            <Seg label="Unlink node tree" w="w-[29px]"><CrossIcon /></Seg>
          </div>
          <button type="button" aria-label="Pin"><PinIcon /></button>
        </div>
        <div className="flex-[471]" />
        <div className="flex gap-[9px]">
          <button type="button" aria-label="Parent node tree" className="flex h-[29px] w-[29px] items-center justify-center rounded-[5px] border border-[#4c4c4c] bg-[#8f8f8f] text-[#7b7b7b]">
            <Svg><path d="M8 2v18h9M3 7l5-5 5 5" /></Svg>
          </button>
          <Segments className="w-[77px]">
            <Seg label="Snap" on w="w-[28px]"><MagnetIcon /></Seg>
            <Seg label="Snap node element" up><Svg><path d="M13 1v20M5 10v11M1 17h20M10 7h11" stroke="#555" /><path d="M1 2h8v8H1z" fill="currentColor" stroke="none" /></Svg><Chevron /></Seg>
          </Segments>
        </div>
      </div>
      <div className="relative min-h-0 flex-1 overflow-hidden">
        <svg className="absolute inset-0 size-full" aria-hidden="true">
          {[...COLS].sort((a, b) => Number(a % 5 === 0) - Number(b % 5 === 0)).map((i) => {
            const x = Math.round(87 + 26.6 * i) + 0.5;
            return <line key={`c${i}`} x1={x} x2={x} y1="0" y2="100%" stroke={tone(i, 25)} />;
          })}
          {[...ROWS].sort((a, b) => Number(a % 5 === 0) - Number(b % 5 === 0)).map((i) => {
            const y = Math.round(218 + 26.7 * i) + 0.5;
            return <line key={`r${i}`} x1="0" x2="100%" y1={y} y2={y} stroke={tone(i, 25)} />;
          })}
          <g fill="none">
            <path d="M487 265L640 264.5C720 264 745 260 810 260L1019 259" stroke="#0b0b0b" strokeWidth="7" opacity="0.6" />
            <path d="M487 265L640 264.5C720 264 745 260 810 260L1019 259" stroke="#9c9c9c" strokeWidth="5" />
            <path d="M487 265L640 264.5C720 264 745 260 810 260L1019 259" stroke="#fff" strokeWidth="3" />
          </g>
        </svg>
        <GraphNode title="Group Input" place="top-[219px] left-[300px] h-[94px]" body="pt-[9px] pr-[15px] text-right">
          Geometry
          <Socket live className="top-[40px] -right-[6px]" />
          <Socket className="top-[69px] -right-[6px]" />
        </GraphNode>
        <GraphNode title="Group Output" place="top-[219px] left-[1019px] h-[88px]" body="pt-[3px] pl-[15px]">
          Geometry
          <Socket live className="top-[34px] -left-[6px]" />
          <Socket className="top-[62px] -left-[6px]" />
        </GraphNode>
        <button type="button" aria-label="Show toolbar" className="absolute top-[21px] left-0 flex h-[22px] w-3 items-center justify-center rounded-r-[4px] bg-[#191919] text-[#b0b0b0]">
          <svg width="8" height="12" fill="none" stroke="currentColor" strokeWidth="2" aria-hidden="true"><path d="M1 1l5 5-5 5" /></svg>
        </button>
        <button type="button" aria-label="Show sidebar" className="absolute top-[21px] right-0 flex h-[22px] w-3 items-center justify-center rounded-l-[4px] bg-[#191919] text-[#b0b0b0]">
          <svg width="8" height="12" fill="none" stroke="currentColor" strokeWidth="2" aria-hidden="true"><path d="M7 1L2 6l5 5" /></svg>
        </button>
        <p className="absolute bottom-[10px] left-[44px] text-white">Cube</p>
      </div>
    </section>
  );
}

/* --------------------------------------------------------------- outliner */

const Disclosure = ({ open }: { open?: boolean }) => (
  <svg width="10" height="10" fill="#c4c4c4" className="shrink-0" aria-hidden="true"><path d={open ? "M1 0h8L5 10z" : "M1 0v9l9-4.5z"} /></svg>
);

function OutlinerRow({ tone: bg, indent, open, icon, name, nameTone = "", extras, checked, hole }: { tone: string; indent: string; open?: boolean; icon: ReactNode; name: string; nameTone?: string; extras?: ReactNode; checked?: boolean; hole?: string }) {
  return (
    <li className={`flex h-[30px] items-center pr-[17px] ${bg} ${indent}`}>
      <button type="button" aria-label={`Toggle ${name}`} aria-expanded={!!open}><Disclosure open={open} /></button>
      <span className="ml-[10px] flex w-[30px] items-center justify-center">{icon}</span>
      <span className={`ml-[6px] pt-px ${nameTone}`}>{name}</span>
      {extras}
      <span className="ml-auto flex items-center gap-[9px]">
        {checked && (
          <span className="mr-[3px] grid">
            <input type="checkbox" defaultChecked aria-label="Include in view layer" className="col-start-1 row-start-1 size-4 appearance-none rounded-[2px] bg-white" />
            <svg width="16" height="16" fill="none" stroke="#222" strokeWidth="2.5" className="pointer-events-none col-start-1 row-start-1" aria-hidden="true"><path d="M3.5 8l3.5 4 5.5-8" /></svg>
          </span>
        )}
        <button type="button" aria-label={`Hide ${name}`}><EyeIcon /></button>
        <button type="button" aria-label={`Render ${name}`}><PhotoIcon hole={hole} /></button>
      </span>
    </li>
  );
}

function Outliner() {
  return (
    <section aria-label="Outliner" className="flex flex-[285] flex-col overflow-hidden rounded-[6px] bg-[#282828] text-[#c0c0c0]">
      <div className="flex h-[38px] shrink-0 items-center bg-[#5c5c5c] pr-[3px] pl-3">
        <MenuButton label="Editor type"><TreeIcon /></MenuButton>
        <span className="ml-2"><MenuButton label="Display mode" w="w-[47px]"><LayersIcon /></MenuButton></span>
        <SearchField label="Filter outliner" icon={<SearchIcon />} className="ml-6 w-[161px]" />
        <span className="ml-auto"><MenuButton label="Filter"><FilterIcon /></MenuButton></span>
        <button type="button" aria-label="New collection" className={`ml-2 flex h-[29px] w-[29px] items-center justify-center rounded-[5px] ${FLAT}`}><NewCollectionIcon /></button>
      </div>
      <ul className="relative pt-px">
        <li className="flex h-[30px] items-center bg-[#282828] pl-[30px]">
          <span className="flex h-[27px] w-[30px] items-center justify-center rounded-[5px] border border-[#5c5c5c] bg-[#484848]"><ArchiveIcon /></span>
          <span className="ml-[6px] pt-px">Scene Collection</span>
        </li>
        <OutlinerRow tone="bg-[#313131]" indent="pl-[40px]" open icon={<ArchiveIcon />} name="Collection" checked />
        <OutlinerRow
          tone="bg-[#282828]" indent="pl-[70px]" icon={<MovieIcon className="text-[#c8834a]" />} name="Camera"
          extras={<span className="ml-[29px] flex h-[27px] w-[30px] items-center justify-center rounded-[5px] border border-[#5c5c5c] bg-[#434343]"><MovieIcon line className="text-[#1fb088]" /></span>}
        />
        <OutlinerRow tone="bg-[#313131]" indent="pl-[70px]" icon={<BulbIcon />} name="Point" extras={<span className="ml-[34px] flex gap-[7px]"><FlowArrow /><LightData /></span>} />
        <OutlinerRow
          tone="bg-[#3b5689]" indent="pl-[40px]" hole="fill-[#3b5689]" name="Cube" nameTone="text-[#f0a42e]"
          icon={<span className="flex h-[27px] w-[30px] shrink-0 items-center justify-center rounded-[5px] bg-[#64789e]"><CubeTriangle /></span>}
          extras={<span className="ml-[34px] flex gap-[8px]"><Wrench line className="text-[#6f9ee8]" /><MeshIcon className="text-[#1fb088]" /></span>}
        />
        <li aria-hidden="true" className="h-[30px] bg-[#313131]" />
        <li aria-hidden="true" className="h-[30px] bg-[#282828]" />
        <li aria-hidden="true" className="h-[30px] bg-[#313131]" />
        <li aria-hidden="true" className="absolute top-[68px] left-[44px] h-[46px] w-px bg-[#6a6a6a]" />
      </ul>
    </section>
  );
}

/* ------------------------------------------------------------- properties */

const TABS: { label: string; icon: ReactNode }[][] = [
  [{ label: "Tool", icon: <ToolTab /> }],
  [
    { label: "Render", icon: <RenderTab /> }, { label: "Output", icon: <OutputTab /> },
    { label: "View layer", icon: <LayersIcon className="text-[#c2c4cf]" /> }, { label: "Scene", icon: <SceneIcon className="text-[#c2c4cf]" /> },
    { label: "World", icon: <WorldTab /> },
  ],
  [
    { label: "Object", icon: <ObjectIcon className="text-[#c8834a]" dim="#94603a" /> }, { label: "Modifiers", icon: <Wrench className="text-[#84b4ff]" /> },
    { label: "Particles", icon: <ParticleTab /> }, { label: "Physics", icon: <PhysicsTab /> }, { label: "Constraints", icon: <ConstraintTab /> },
    { label: "Data", icon: <MeshIcon className="text-[#17a883]" /> }, { label: "Material", icon: <MaterialTab /> },
  ],
  [{ label: "Texture", icon: <CheckerTab /> }],
];

const ListLines = ({ children }: { children: ReactNode }) => (
  <Svg className="text-[#e6e6e6]"><path d="M1 2h18M1 7h18M1 12h5M1 17h5M1 21h5" />{children}</Svg>
);

function Properties() {
  return (
    <section aria-label="Properties" className="flex min-h-0 flex-[684] flex-col overflow-hidden rounded-t-[6px] bg-[#424242] text-[#e0e0e0]">
      <div className="flex h-[38px] shrink-0 items-center bg-[#5a5a5a] px-[12px]">
        <MenuButton label="Editor type" w="w-[47px]"><PropsIcon /></MenuButton>
        <SearchField label="Search properties" icon={<SearchIcon />} className="mx-auto w-[161px]" />
        <button type="button" aria-label="Options" className={`ml-[32px] flex h-[29px] w-[29px] items-center justify-center rounded-[5px] ${RAISED}`}><Chevron /></button>
      </div>
      <div className="flex min-h-0 flex-1">
        <div role="tablist" aria-label="Property tabs" aria-orientation="vertical" data-tab="" className="flex w-[42px] shrink-0 flex-col gap-[13px] bg-[#292929] pt-3 pl-px">
          {TABS.map((group, g) => (
            <div key={g} className="flex flex-col gap-px">
              {group.map((t) => (
                <button
                  key={t.label}
                  type="button"
                  role="tab"
                  aria-label={t.label}
                  aria-selected={t.label === "Modifiers"}
                  className={`flex h-[41px] items-center justify-center rounded-l-[5px] border border-r-0 border-[#1f4a85] bg-linear-to-b ${t.label === "Modifiers" ? "from-[#1c3f74] to-[#38609c]" : "from-[#171d4e] to-[#000020]"}`}
                >
                  {t.icon}
                </button>
              ))}
            </div>
          ))}
        </div>
        <div className="flex min-w-0 flex-1 flex-col px-3">
          <div className="flex h-[53px] items-center pl-[4px]">
            <ObjectIcon /><span className="ml-[14px]">Cube</span>
            <svg width="6" height="8" fill="#2c2c2c" className="ml-[18px]" aria-hidden="true"><path d="M0 0v8l6-4z" /></svg>
            <NodesIcon className="ml-[20px]" inner="#555" /><span className="ml-[13px]">GeometryNodes</span>
            <button type="button" aria-label="Pin" className="mr-[4px] ml-auto"><PinIcon /></button>
          </div>
          <div className="mt-[20px] flex gap-[13px]">
            <SearchField label="Search modifiers" icon={<Wrench />} className="min-w-0 flex-1" />
            <MenuButton label="Add modifier" w="w-[135px]"><span className="mr-[6px] ml-[6px] whitespace-nowrap">Add Modifier</span></MenuButton>
          </div>
          <div className="mt-[7px] flex h-[179px] flex-col rounded-[5px] border border-[#3a3a3a] bg-[#6d6d6d] p-[6px]">
            <div className="flex h-[29px] items-center rounded-[5px] bg-[#6a6e78] pl-[3px] text-white">
              <NodesIcon inner="#777" /><span className="ml-[28px]">GeometryNodes</span>
              <span className="mr-[34px] ml-auto flex items-center gap-[9px]"><PhotoIcon hole="fill-[#6a6e78]" /><MonitorIcon /><EditBox /></span>
            </div>
            <div className="relative mt-auto flex items-center justify-center pb-[5px] pl-[28px]">
              <svg width="10" height="10" fill="#e0e0e0" className="absolute left-[9px]" aria-hidden="true"><path d="M0 1v8l10-4z" /></svg>
              <svg width="18" height="8" fill="none" stroke="#e8e8e8" strokeWidth="2" strokeDasharray="2 3" aria-hidden="true"><path d="M0 1.5h18M0 6.5h18" /></svg>
            </div>
          </div>
          <div className="mt-[7px] flex justify-between gap-[13px]">
            <Segments className="w-[186px]">
              <Seg label="Toggle visibility"><ListLines><path d="M7 16c3-5 11-5 14 0-3 5-11 5-14 0z" stroke="#fff" /><circle cx="14" cy="16" r="2" fill="#fff" /></ListLines></Seg>
              <Seg label="Apply all"><ListLines><path d="M10 16l4 4 7-9" stroke="#fff" strokeWidth="2.2" /></ListLines></Seg>
              <Seg label="Delete all"><ListLines><path d="M11 12l9 9M20 12l-9 9" stroke="#fff" strokeWidth="2.5" /></ListLines></Seg>
              <Seg label="More" up w="w-[28px]"><Svg s={14} box={14}><path d="M1 4l6 6 6-6" strokeWidth="1.8" /></Svg></Seg>
            </Segments>
            <Segments className="w-[143px]">
              <Seg label="Move up" off><svg width="12" height="9" fill="currentColor" aria-hidden="true"><path d="M6 0l6 9H0z" /></svg></Seg>
              <Seg label="Move down" off><svg width="12" height="9" fill="currentColor" aria-hidden="true"><path d="M0 0h12L6 9z" /></svg></Seg>
              <Seg label="Remove modifier"><svg width="14" height="2" aria-hidden="true"><path d="M0 1h14" stroke="#1a1a1a" strokeWidth="2" /></svg></Seg>
            </Segments>
          </div>
          <div className="mt-[7px] rounded-[5px] border border-[#3a3a3a] bg-[#6d6d6d] text-[#1a1a1a]">
            <div className="flex items-center px-[6px] pt-[6px]">
              <NodesIcon className="ml-[4px]" inner="#777" />
              <input aria-label="Modifier name" defaultValue="GeometryNo..." className={`ml-[16px] h-[29px] w-[131px] rounded-[5px] pl-[11px] outline-none ${FLAT}`} />
              <Segments className="ml-[12px] w-[108px]">
                <Seg label="Render" on><PhotoIcon hole="fill-[#5079b8]" /></Seg>
                <Seg label="Realtime" on><MonitorIcon /></Seg>
                <Seg label="Edit mode" on><EditBox /></Seg>
              </Segments>
            </div>
            <Segments className="mx-[6px] mt-[13px]">
              <Seg label="Apply"><Svg className="text-white"><path d="M1.5 11l6.5 7L20 3" strokeWidth="3.5" /></Svg></Seg>
              <Seg label="Duplicate"><CopyIcon /></Seg>
            </Segments>
            <div className="mt-[6px] flex items-center gap-[6px] border-t border-[#4a4a4a] px-[6px] py-[7px]">
              <span className="w-[76px] whitespace-nowrap">Node Gr...</span>
              <div className={`flex h-[29px] min-w-0 flex-1 items-center rounded-[5px] pr-[9px] pl-[6px] ${FLAT}`}>
                <NodesIcon />
                <input aria-label="Node group" defaultValue="Geometry Nodes" className="ml-[9px] min-w-0 flex-1 bg-transparent outline-none" />
                <button type="button" aria-label="Unlink node group"><CrossIcon className="text-[#555]" /></button>
              </div>
            </div>
          </div>
        </div>
      </div>
    </section>
  );
}

export default function App() {
  return (
    <div className="flex h-screen flex-col overflow-hidden bg-[#1f1f1f] font-[Roboto,sans-serif] text-[17px] leading-5">
      <TitleBar />
      <MenuBar />
      <main className="mt-[2px] flex min-h-0 flex-1 gap-[3px] px-px">
        <div className="flex min-w-0 flex-1 flex-col gap-[3px]">
          <div className="flex min-h-0 flex-[525] gap-[3px]">
            <Spreadsheet />
            <Viewport />
          </div>
          <NodeEditor />
        </div>
        <div className="flex w-[409px] shrink-0 flex-col gap-[3px]">
          <Outliner />
          <Properties />
        </div>
      </main>
    </div>
  );
}
